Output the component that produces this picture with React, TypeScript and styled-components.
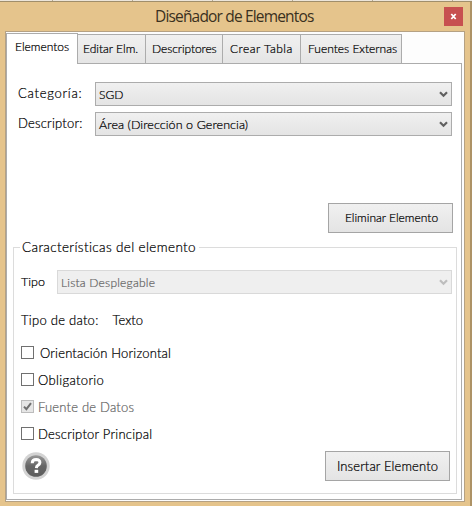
import React from 'react';
import styled, { createGlobalStyle } from 'styled-components';

const GlobalStyle = createGlobalStyle`
  * { box-sizing: border-box; }
  body { margin: 0; background: #e5c48c; overflow: hidden; }
`;

const Screen = styled.div`
  width: 472px;
  height: 506px;
  display: flex;
  flex-direction: column;
  background: #e5c48c;
  color: #000;
  font: 300 13px/16px Lato, 'Liberation Sans', sans-serif;
  -webkit-text-stroke: 0.22px currentColor;
  white-space: nowrap;
`;

const Backdrop = styled.div`
  height: 2px;
  flex: none;
  background: repeating-linear-gradient(90deg, #b5a88f 0 1px, #ece5da 1px 80px) 52px 0;
  border-bottom: 1px solid #a08e6b;
`;

const Window = styled.div`
  flex: 1;
  display: flex;
  flex-direction: column;
  padding: 0 5px 4px 5px;
  border-right: 2px solid #ad9265;
`;

const TitleBar = styled.header`
  height: 29px;
  flex: none;
  display: grid;
  grid-template-columns: 1fr 19px;
  align-items: center;
  padding-right: 2px;
`;

const Title = styled.h1`
  margin: 0 0 1px 150px;
  color: #3a3020;
  font: 400 15.5px/22px 'Open Sans', 'Noto Sans', sans-serif;
  letter-spacing: -0.83px;
  -webkit-text-stroke: 0;
`;

const Close = styled.button`
  width: 19px;
  height: 19px;
  margin-bottom: 1px;
  padding: 0;
  border: 0;
  display: grid;
  place-items: center;
  background: #c75050;
`;

const Client = styled.main`
  flex: 1;
  display: flex;
  flex-direction: column;
  padding: 1px 2px 1px 0;
  border: 1px solid #b5a183;
  background: #fdfdfd;
`;

const Tabs = styled.nav`
  height: 31px;
  flex: none;
  display: flex;
  align-items: flex-end;
`;

const Tab = styled.button<{ $w: number; $active?: boolean; $ls?: number; $indent: number }>`
  width: ${p => p.$w}px;
  height: ${p => (p.$active ? 31 : 30)}px;
  padding: 0 0 ${p => (p.$active ? 4 : 0)}px ${p => p.$indent}px;
  border: 1px solid #acacac;
  border-width: ${p => (p.$active ? '1px 1px 0 1px' : '1px 1px 1px 0')};
  background: ${p => (p.$active ? '#fff' : 'linear-gradient(#f0f0f0, #e5e5e5)')};
  color: #000;
  font: 300 12px/16px Lato, sans-serif;
  letter-spacing: ${p => p.$ls ?? 0}px;
  text-align: left;
`;

const TabFiller = styled.div`
  flex: 1;
  height: 1px;
  background: #acacac;
`;

const Panel = styled.section`
  flex: 1;
  display: flex;
  flex-direction: column;
  padding: 18px 4px 5px 6px;
  border: 1px solid #acacac;
  border-top: 0;
  background: #fff;
`;

const Field = styled.div`
  display: grid;
  grid-template-columns: 77px 357px;
  align-items: center;
  height: 24px;
  margin: 0 0 6px 5px;
`;

const Text = styled.span<{ $ls?: number; $size?: number; $muted?: boolean }>`
  font-size: ${p => p.$size ?? 13}px;
  letter-spacing: ${p => p.$ls ?? 0}px;
  color: ${p => (p.$muted ? '#666' : '#000')};
`;

const FieldLabel = styled(Text)`
  padding-bottom: 2px;
`;

const Combo = styled.div<{ $disabled?: boolean }>`
  height: 24px;
  display: flex;
  align-items: center;
  justify-content: space-between;
  padding: 1px 3px 0;
  border: 1px solid ${p => (p.$disabled ? '#d9d9d9' : '#acacac')};
  background: ${p => (p.$disabled ? '#efefef' : 'linear-gradient(#f0f0f0, #e4e4e4)')};
  color: ${p => (p.$disabled ? '#bdbdbd' : '#606060')};
`;

const PushButton = styled.button<{ $ls?: number; $size: number; $indent?: number }>`
  width: 125px;
  height: 30px;
  padding: 0 0 0 ${p => p.$indent ?? 0}px;
  border: 1px solid #a5a5a5;
  background: linear-gradient(#f0f0f0, #e4e4e4);
  color: #000;
  font: 300 ${p => p.$size}px/16px Lato, sans-serif;
  letter-spacing: ${p => p.$ls ?? 0}px;
`;

const Actions = styled.div`
  display: flex;
  justify-content: flex-end;
  padding: 61px 4px 0 0;
`;

const Group = styled.fieldset`
  flex: 1;
  display: flex;
  flex-direction: column;
  min-width: 0;
  margin: 6px 0 0;
  padding: 15px 5px 12px 7px;
  border: 1px solid #dcdcdc;
`;

const Legend = styled.legend`
  height: 16px;
  margin-left: -1px;
  padding: 0 3px 0 2px;
  font-size: 13.5px;
  letter-spacing: 0.36px;
`;

const TypeRow = styled.div`
  display: grid;
  grid-template-columns: 36px 395px;
  align-items: center;
`;

const DataRow = styled.div`
  display: flex;
  gap: 14px;
  padding: 18px 0 18px;
`;

const CheckRow = styled.label<{ $gap?: number }>`
  display: flex;
  align-items: center;
  gap: ${p => p.$gap ?? 4}px;
  height: 13px;
  margin-bottom: 14px;
`;

const CheckBox = styled.span<{ $disabled?: boolean }>`
  width: 13px;
  height: 13px;
  display: grid;
  place-items: center;
  border: 1px solid ${p => (p.$disabled ? '#bcbcbc' : '#707070')};
  background: ${p => (p.$disabled ? '#e6e6e6' : '#fff')};
`;

const Footer = styled.footer`
  flex: 1;
  display: flex;
  align-items: flex-end;
  justify-content: space-between;
  margin-top: -6px;
  padding: 0 1px;
`;

const HelpSvg = styled.svg`
  margin-bottom: 1px;
`;

const Chevron = () => (
  <svg width="9" height="7" viewBox="0 0 9 7">
    <path d="M1 1.2 4.5 4.7 8 1.2" fill="none" stroke="currentColor" strokeWidth="2.2" />
  </svg>
);

const HelpIcon = () => (
  <HelpSvg width="28" height="28" viewBox="0 0 28 28">
    <defs>
      <linearGradient id="disc" x1="0" y1="0" x2="0" y2="1">
        <stop offset="0" stopColor="#999" />
        <stop offset=".5" stopColor="#666" />
        <stop offset="1" stopColor="#5c5c5c" />
      </linearGradient>
    </defs>
    <circle cx="14" cy="14" r="13.7" fill="#d3d3d3" />
    <circle cx="14" cy="14" r="10.8" fill="url(#disc)" />
    <path d="M10.2 11.2Q10.3 7.6 14.2 7.6Q18 7.7 17.9 10.6Q17.8 12.3 15.9 13.3Q14.5 14.1 14.4 16.1" fill="none" stroke="#fff" strokeWidth="3" />
    <path d="M12.6 17.8H16.2V20.9H12.6Z" fill="#fff" />
  </HelpSvg>
);

export default function App() {
  return (
    <Screen>
      <GlobalStyle />
      <Backdrop />
      <Window>
        <TitleBar>
          <Title>Diseñador de Elementos</Title>
          <Close aria-label="Cerrar">
            <svg width="7" height="7" viewBox="0 0 7 7">
              <path d="M1.3 1 5.7 6M5.7 1 1.3 6" stroke="#fff" strokeWidth="1.8" />
            </svg>
          </Close>
        </TitleBar>
        <Client>
          <Tabs>
            <Tab $active $w={72} $indent={8} $ls={0}>Elementos</Tab>
            <Tab $w={68} $indent={5} $ls={0}>Editar Elm.</Tab>
            <Tab $w={77} $indent={6} $ls={-0.08}>Descriptores</Tab>
            <Tab $w={78} $indent={7} $ls={0.5}>Crear Tabla</Tab>
            <Tab $w={101} $indent={7} $ls={0}>Fuentes Externas</Tab>
            <TabFiller />
          </Tabs>
          <Panel>
            <Field>
              <FieldLabel $ls={0.75}>Categoría:</FieldLabel>
              <Combo><Text $size={12}>SGD</Text><Chevron /></Combo>
            </Field>
            <Field>
              <FieldLabel $ls={0.22}>Descriptor:</FieldLabel>
              <Combo><Text $size={12.5} $ls={0.08}>Área (Dirección o Gerencia)</Text><Chevron /></Combo>
            </Field>
            <Actions>
              <PushButton $size={12} $ls={0} $indent={2}>Eliminar Elemento</PushButton>
            </Actions>
            <Group>
              <Legend>Características del elemento</Legend>
              <TypeRow>
                <Text $size={12.5}>Tipo</Text>
                <Combo $disabled><Text $size={12} $ls={0.22} $muted>Lista Desplegable</Text><Chevron /></Combo>
              </TypeRow>
              <DataRow>
                <Text $ls={0.27}>Tipo de dato:</Text>
                <Text $ls={0}>Texto</Text>
              </DataRow>
              <CheckRow $gap={6}><CheckBox /><Text $ls={0.18}>Orientación Horizontal</Text></CheckRow>
              <CheckRow><CheckBox /><Text $ls={0.35}>Obligatorio</Text></CheckRow>
              <CheckRow>
                <CheckBox $disabled>
                  <svg width="9" height="9" viewBox="0 0 9 9">
                    <path d="M1 4.6 3.4 7.2 8 1.2" fill="none" stroke="#707070" strokeWidth="2" />
                  </svg>
                </CheckBox>
                <Text $ls={0.2} $muted>Fuente de Datos</Text>
              </CheckRow>
              <CheckRow><CheckBox /><Text $ls={0.23}>Descriptor Principal</Text></CheckRow>
              <Footer>
                <HelpIcon />
                <PushButton $size={13} $ls={0.13}>Insertar Elemento</PushButton>
              </Footer>
            </Group>
          </Panel>
        </Client>
      </Window>
    </Screen>
  );
}
